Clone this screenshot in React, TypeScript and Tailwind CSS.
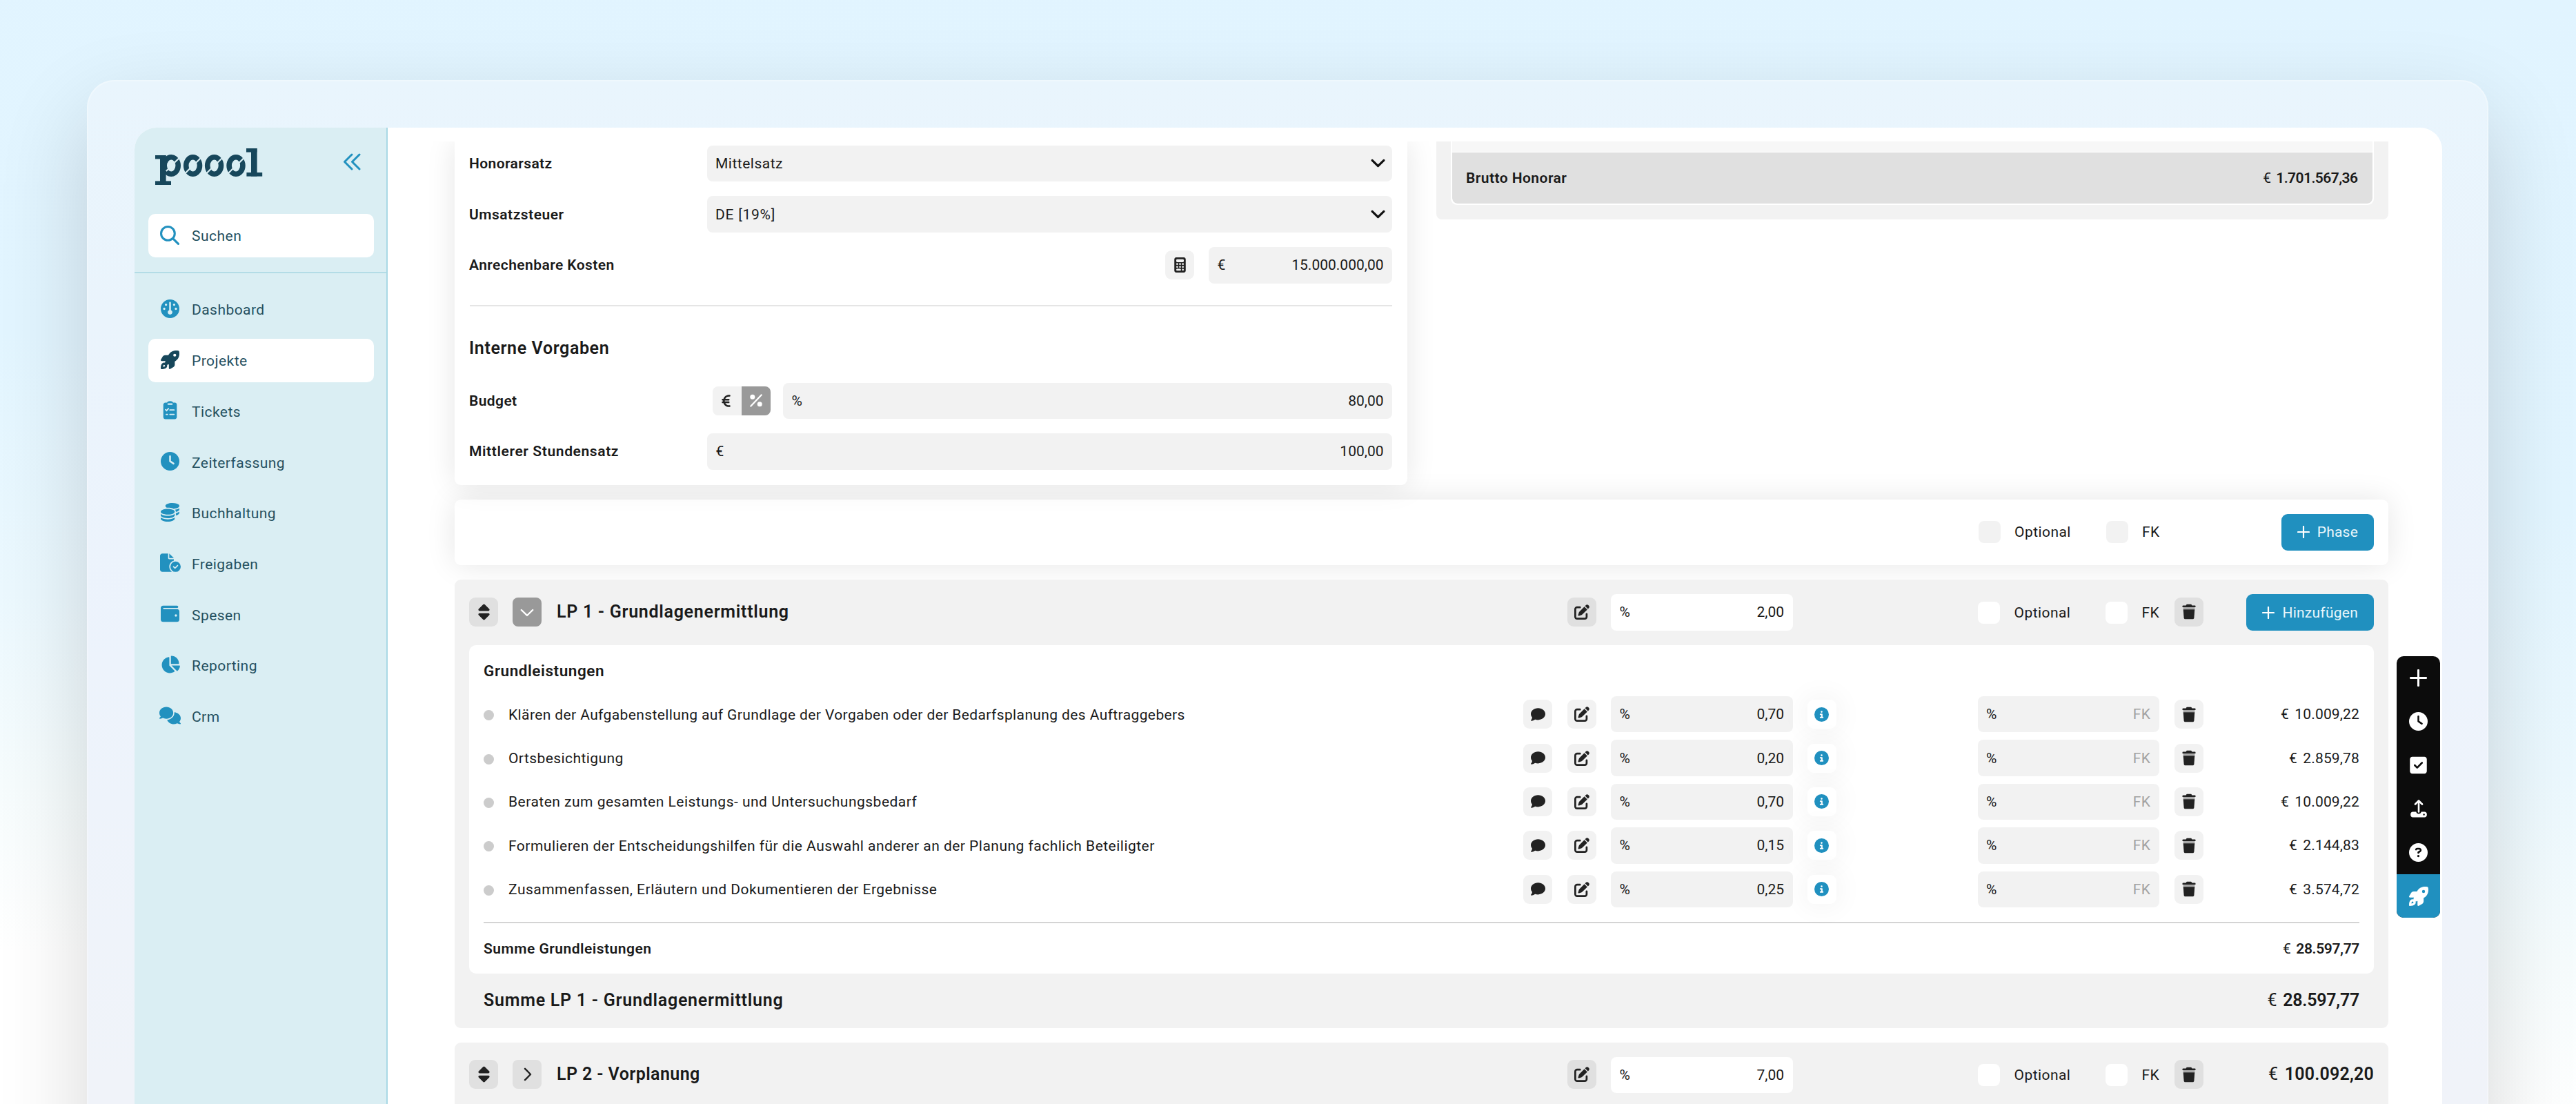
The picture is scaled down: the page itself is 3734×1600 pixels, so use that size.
import React from "react";
import {
  FaCalculator,
  FaChartPie,
  FaCircleInfo,
  FaCircleQuestion,
  FaClock,
  FaCoins,
  FaComment,
  FaComments,
  FaEuroSign,
  FaFileCircleCheck,
  FaGauge,
  FaPenToSquare,
  FaSort,
  FaSquareCheck,
  FaWallet,
} from "react-icons/fa6";

type IconProps = { className?: string };

/* ---------- Icons ---------- */

const Logo = () => (
  <svg viewBox="0 0 156 54" className="h-[54px] w-[156px]" role="img" aria-label="poool">
    <g fill="#17475b">
      <rect x="0" y="10" width="15.5" height="5.4" />
      <rect x="7" y="10" width="8.6" height="43" />
      <rect x="0" y="47.4" width="23" height="5.6" />
      <rect x="132" y="0" width="15.5" height="5.6" />
      <rect x="139" y="0" width="8.6" height="40.5" />
      <rect x="132.4" y="35" width="22.8" height="5.6" />
    </g>
    <g fill="none" stroke="#17475b" strokeWidth="7.6">
      <ellipse cx="23.2" cy="25" rx="10" ry="12.2" />
      <ellipse cx="54.6" cy="25" rx="9.9" ry="12.2" />
      <ellipse cx="85.6" cy="25" rx="9.9" ry="12.2" />
      <ellipse cx="117" cy="25" rx="9.9" ry="12.2" />
    </g>
    <g stroke="#daeef3" strokeWidth="2.2">
      <path d="M28 20.500 36.500 12.500M21.500 27.500 15.800 33M59 21 67.500 12.500M50.500 29 42 37.500M90 21 98.500 12.500M81.500 29 73 37.500M121.500 21 130 12.500M113 29 104.500 37.500" />
    </g>
  </svg>
);

const DoubleChevron = () => (
  <svg viewBox="0 0 26 25" className="h-[25px] w-[26px]" fill="none" stroke="#2291bf" strokeWidth="3" strokeLinecap="round" strokeLinejoin="round">
    <path d="M13 2 2.500 12.500 13 23M24 2 13.500 12.500 24 23" />
  </svg>
);

const Search = ({ className }: IconProps) => (
  <svg viewBox="0 0 27 27" className={className} fill="none" stroke="currentColor" strokeWidth="3" strokeLinecap="round">
    <circle cx="11" cy="11" r="9.500" />
    <path d="m18 18 7.500 7.500" />
  </svg>
);

const Rocket = ({ className }: IconProps) => (
  <svg viewBox="0 0 512 512" className={className} fill="currentColor" fillRule="evenodd">
    <path d="M156.600 384.900 125.700 354c-8.500-8.500-11.500-20.800-7.700-32.200 3-8.900 7-20.500 11.800-33.800H24c-8.600 0-16.600-4.600-20.900-12.100s-4.200-16.700.2-24.100l52.500-88.500C69.700 140.100 94.800 126 122 126h88c2.400-4 4.800-7.700 7.200-11.300C289.100-4.100 411.100-8.100 483.900 5.300c11.600 2.100 20.600 11.200 22.800 22.800 13.400 72.900 9.300 194.800-109.400 266.700-3.500 2.300-7.300 4.800-11.300 7.200v88c0 27.200-14.100 52.300-37.500 66.200l-88.500 52.500c-7.400 4.400-16.600 4.500-24.100.2S224 496.600 224 488V380.800c-14.100 4.900-26.400 8.900-35.700 11.900-11.200 3.600-23.400.5-31.800-7.800zM384 168a40 40 0 1 0 0-80 40 40 0 1 0 0 80z" />
    <path d="M0 495c0-60 8-108 38-138a81 81 0 0 1 116 116c-30 30-78 38-137 39-10 0-17-7-17-17zm66-49c20-1 37-3 46-12a25 25 0 0 0-35-35c-9 9-11 26-12 46z" />
  </svg>
);

const Clipboard = ({ className }: IconProps) => (
  <svg viewBox="0 0 20 27" className={className} fill="currentColor">
    <path d="M3.500 2.500h2C6.500.9 8 .2 10 .2s3.500.7 4.500 2.300h2c2 0 3.300 1.300 3.300 3.300v17.500c0 2-1.300 3.300-3.300 3.300h-13c-2 0-3.300-1.300-3.300-3.300V5.800c0-2 1.300-3.300 3.300-3.300z" />
    <rect x="6.200" y="3.600" width="7.600" height="2.200" rx="1.100" fill="#daeef3" />
    <path d="m3.500 12.700 1.500 1.500 2.700-3M9.800 13.200h6M9.800 19.600h6M4.500 19.600h1.800" stroke="#daeef3" strokeWidth="1.800" fill="none" strokeLinecap="round" />
  </svg>
);

const Trash = () => (
  <svg viewBox="0 0 20 22" className="h-[23px] w-[20px]" fill="#222">
    <path d="M6 1.300C6.200.600 6.800.2 7.500.2h5c.7 0 1.300.4 1.500 1.100l.3.700h4.200c.6 0 1 .4 1 .9v1.600H.5V2.900c0-.5.400-.9 1-.9h4.200z" />
    <path d="M1.500 4.500h17l-.2 3.400H1.700z" fill="#a9a9a9" />
    <path d="M1.700 7.800h16.600l-.9 12.200c-.1 1-.9 1.800-2 1.800H4.600c-1.100 0-1.900-.8-2-1.800z" />
  </svg>
);

const Percent = () => (
  <svg viewBox="0 0 20 20" className="h-[19px] w-[20px]">
    <path d="M18 1.500 2 18.500" stroke="#fff" strokeWidth="2.400" strokeLinecap="round" />
    <circle cx="4.500" cy="4.500" r="3.700" fill="#fff" />
    <circle cx="15.500" cy="15.500" r="3.700" fill="#fff" />
  </svg>
);

const Plus = ({ className }: IconProps) => (
  <svg viewBox="0 0 18 18" className={className} stroke="currentColor" strokeWidth="2.200" strokeLinecap="round">
    <path d="M9 1v16M1 9h16" />
  </svg>
);

const Chevron = ({ className }: IconProps) => (
  <svg viewBox="0 0 20 12" className={className} fill="none" stroke="currentColor" strokeWidth="3" strokeLinecap="round" strokeLinejoin="round">
    <path d="m2 2 8 8 8-8" />
  </svg>
);

const Upload = () => (
  <svg viewBox="0 0 24 26" className="h-[26px] w-[24px]" fill="none" stroke="#fff" strokeLinecap="round" strokeLinejoin="round">
    <path d="M12 17.500V2M7 6.500 12 1.500l5 5" strokeWidth="2.600" />
    <path d="M3.500 17.500h4.800c.4 1.900 1.800 3 3.700 3s3.300-1.100 3.700-3h4.800c1.900 0 3.300 1.300 3.300 3.200v1.600c0 1.900-1.400 3.200-3.300 3.200h-17C1.600 25.500.2 24.200.2 22.300v-1.600c0-1.900 1.400-3.200 3.300-3.200z" fill="#fff" stroke="none" />
    <circle cx="19.600" cy="21.500" r="1.200" fill="#0c0c0c" stroke="none" />
  </svg>
);

/* ---------- Small building blocks ---------- */

const Money = ({ value, className }: { value: string; className: string }) => (
  <span className={className}>
    <span className="mr-[3px] font-normal">€ </span>
    {value}
  </span>
);

const Square = ({ dark, children }: { dark?: boolean; children: React.ReactNode }) => (
  <span className={`flex h-[42px] w-[42px] shrink-0 items-center justify-center rounded-[9px] text-[#222] ${dark ? "bg-[#e0e0e0]" : "bg-[#f2f2f2]"}`}>
    {children}
  </span>
);

const Field = ({ unit, value, className }: { unit: string; value: string; className: string }) => (
  <div className={`flex h-[52.400px] shrink-0 items-center justify-between rounded-[8px] px-[12.500px] ${className}`}>
    <span>{unit}</span>
    {value === "FK" ? <span className="text-[#a3a3a3]">FK</span> : <span className="tracking-normal">{value}</span>}
  </div>
);

const Label = ({ children, className }: { children: string; className: string }) => (
  <span className={`-ml-px w-[345px] shrink-0 font-semibold ${className}`}>{children}</span>
);

const Checks = ({ box }: { box: string }) => (
  <div className="flex w-[263.500px] shrink-0 items-center">
    <span className={`h-[32px] w-[32px] shrink-0 rounded-[8px] ${box}`} />
    <span className="ml-[20.500px] w-[132.500px] shrink-0">Optional</span>
    <span className={`h-[32px] w-[32px] shrink-0 rounded-[8px] ${box}`} />
    <span className="ml-[20.500px]">FK</span>
  </div>
);

const Button = ({ children, gap }: { children: string; gap: string }) => (
  <button className={`flex h-[52.600px] items-center rounded-[9px] bg-[#2090bf] px-[23px] text-[#e9f6fb] ${gap}`}>
    <Plus className="h-[18px] w-[18px] text-white" />
    {children}
  </button>
);

/* ---------- Sidebar ---------- */

const nav = [
  { label: "Dashboard", icon: <FaGauge className="h-[27px] w-[27px]" /> },
  { label: "Projekte", icon: <Rocket className="h-[27px] w-[27px]" />, active: true },
  { label: "Tickets", icon: <Clipboard className="h-[27px] w-[21px]" /> },
  { label: "Zeiterfassung", icon: <FaClock className="h-[27px] w-[27px]" /> },
  { label: "Buchhaltung", icon: <FaCoins className="h-[27px] w-[27px]" /> },
  { label: "Freigaben", icon: <FaFileCircleCheck className="h-[27px] w-[30px]" /> },
  { label: "Spesen", icon: <FaWallet className="h-[27px] w-[27px]" /> },
  { label: "Reporting", icon: <FaChartPie className="h-[28px] w-[28px]" /> },
  { label: "Crm", icon: <FaComments className="h-[30px] w-[31px]" /> },
];

const Sidebar = () => (
  <aside className="flex w-[367px] shrink-0 flex-col border-r-2 border-[#a9d9e5] bg-[#daeef3] text-[#24505f]">
    <div className="flex h-[125px] items-start justify-between pr-[37px] pl-[30px] pt-[30px]">
      <Logo />
      <span className="mt-[7px]">
        <DoubleChevron />
      </span>
    </div>
    <div className="border-b-2 border-[#b3dce6] pr-[18.500px] pl-[20px] pb-[21px]">
      <div className="flex h-[63.300px] items-center rounded-[10px] bg-white pl-[17px]">
        <Search className="mb-[1px] h-[28px] w-[28px] text-[#2291bf]" />
        <span className="ml-[18px] pt-px tracking-[0.500px]">Suchen</span>
      </div>
    </div>
    <nav className="flex flex-col gap-[10.400px] pr-[18.500px] pl-[20px] pt-[21.500px]">
      {nav.map((n) => (
        <div key={n.label} className={`flex h-[63.300px] items-center rounded-[10px] pl-[16px] ${n.active ? "bg-white" : ""}`}>
          <span className={`mb-[3px] flex w-[31px] justify-center ${n.active ? "text-[#17475b]" : "text-[#2291bf]"}`}>{n.icon}</span>
          <span className="ml-[16px] pt-px tracking-[0.450px]">{n.label}</span>
        </div>
      ))}
    </nav>
  </aside>
);

/* ---------- Settings cards ---------- */

const Settings = () => (
  <section className="flex h-[498px] w-[1381px] flex-col rounded-b-[9px] bg-white px-[22px] pt-[6.300px] shadow-[0_0_43px_rgba(0,0,0,0.1)]">
    <div className="flex flex-col gap-[21.300px]">
      <div className="flex items-center">
        <Label className="tracking-[0.400px]">Honorarsatz</Label>
        <div className="flex h-[52.400px] grow items-center justify-between rounded-[8px] bg-[#f2f2f2] pr-[10.500px] pl-[12px]">
          <span className="tracking-[0.500px]">Mittelsatz</span>
          <Chevron className="h-[13px] w-[21px] text-[#111]" />
        </div>
      </div>
      <div className="flex items-center">
        <Label className="tracking-[0.500px]">Umsatzsteuer</Label>
        <div className="flex h-[52.400px] grow items-center justify-between rounded-[8px] bg-[#f2f2f2] pr-[10.500px] pl-[12px]">
          <span className="tracking-[0.750px]">DE [19%]</span>
          <Chevron className="h-[13px] w-[21px] text-[#111]" />
        </div>
      </div>
      <div className="flex items-center justify-between">
        <Label className="tracking-[0.420px]">Anrechenbare Kosten</Label>
        <div className="flex items-center gap-[21px]">
          <Square>
            <FaCalculator className="h-[22px] w-[17px]" />
          </Square>
          <Field unit="€" value="15.000.000,00" className="w-[266px] bg-[#f2f2f2]" />
        </div>
      </div>
    </div>
    <hr className="mt-[31.500px] border-t-2 border-[#e5e5e5]" />
    <h2 className="mt-[46px] -ml-px text-[25px] leading-[30px] font-semibold tracking-[0.620px]">Interne Vorgaben</h2>
    <div className="mt-[34.500px] flex flex-col gap-[21.300px]">
      <div className="flex items-center">
        <Label className="tracking-[0.400px]">Budget</Label>
        <div className="ml-[7.500px] flex h-[42px] w-[84px] shrink-0 overflow-hidden rounded-[8px] bg-[#f2f2f2]">
          <span className="flex w-1/2 items-center justify-center pr-[2px] text-[#222]">
            <FaEuroSign className="h-[20px] w-[15px]" />
          </span>
          <span className="flex w-1/2 items-center justify-center bg-[#999]">
            <Percent />
          </span>
        </div>
        <Field unit="%" value="80,00" className="ml-[18.500px] grow bg-[#f2f2f2]" />
      </div>
      <div className="flex items-center">
        <Label className="tracking-[0.620px]">Mittlerer Stundensatz</Label>
        <Field unit="€" value="100,00" className="grow bg-[#f2f2f2]" />
      </div>
    </div>
  </section>
);

const Gross = () => (
  <section className="flex h-[113px] w-[1380px] flex-col rounded-b-[8px] bg-[#f2f2f2] px-[21px]">
    <div className="overflow-hidden rounded-b-[9px] border-x-2 border-b-2 border-white bg-white">
      <div className="mb-[1.500px] h-[15px] bg-[#f7f7f7]" />
      <div className="flex h-[74px] items-center justify-between rounded-b-[8px] bg-[#e0e0e0] pr-[21.500px] pl-[20px] font-semibold">
        <span className="tracking-[0.450px]">Brutto Honorar</span>
        <Money value="1.701.567,36" className="tracking-[-0.550px]" />
      </div>
    </div>
  </section>
);

/* ---------- Phases ---------- */

const PhaseBar = () => (
  <section className="mt-[21.500px] flex h-[94.500px] items-center justify-end rounded-[9px] bg-white pr-[21px] shadow-[0_0_43px_rgba(0,0,0,0.1)]">
    <Checks box="bg-[#f2f2f2]" />
    <div className="flex w-[310px] justify-end tracking-[0.200px]">
      <Button gap="gap-[11px]">Phase</Button>
    </div>
  </section>
);

const PhaseHeader = ({ title, percent, open, tracking, children }: { title: string; percent: string; open?: boolean; tracking: string; children: React.ReactNode }) => (
  <div className="flex h-[93px] items-center px-[21px]">
    <Square dark>
      <FaSort className="h-[26px] w-[19px]" />
    </Square>
    <span className={`ml-[21px] flex h-[42px] w-[42px] shrink-0 items-center justify-center rounded-[8px] ${open ? "bg-[#999] text-white" : "bg-[#e0e0e0] text-[#222]"}`}>
      <svg viewBox="0 0 20 20" className={`h-[20px] w-[20px] ${open ? "" : "-rotate-90"}`} fill="none" stroke="currentColor" strokeWidth="2.400" strokeLinecap="round" strokeLinejoin="round">
        <path d="m1.800 7 8.200 8 8.200-8" />
      </svg>
    </span>
    <h2 className={`ml-[22px] w-[1464.500px] shrink-0 text-[25px] leading-[30px] font-semibold ${tracking}`}>{title}</h2>
    <Square dark>
      <FaPenToSquare className="h-[22px] w-[22px]" />
    </Square>
    <Field unit="%" value={percent} className="mt-[2px] ml-[21.500px] w-[263.500px] bg-white" />
    <div className="mt-[2px] ml-[268.500px]">
      <Checks box="bg-white" />
    </div>
    <div className="ml-[21.500px]">
      <Square dark>
        <Trash />
      </Square>
    </div>
    <div className="flex grow justify-end">{children}</div>
  </div>
);

const services = [
  { text: "Klären der Aufgabenstellung auf Grundlage der Vorgaben oder der Bedarfsplanung des Auftraggebers", percent: "0,70", amount: "10.009,22", tracking: "tracking-[0.390px]" },
  { text: "Ortsbesichtigung", percent: "0,20", amount: "2.859,78", tracking: "tracking-[0.420px]" },
  { text: "Beraten zum gesamten Leistungs- und Untersuchungsbedarf", percent: "0,70", amount: "10.009,22", tracking: "tracking-[0.490px]" },
  { text: "Formulieren der Entscheidungshilfen für die Auswahl anderer an der Planung fachlich Beteiligter", percent: "0,15", amount: "2.144,83", tracking: "tracking-[0.480px]" },
  { text: "Zusammenfassen, Erläutern und Dokumentieren der Ergebnisse", percent: "0,25", amount: "3.574,72", tracking: "tracking-[0.490px]" },
];

const PhaseOne = () => (
  <section className="relative mt-[21.500px] h-[649.500px] rounded-[9px] bg-[#f2f2f2]">
    <PhaseHeader title="LP 1 - Grundlagenermittlung" percent="2,00" open tracking="tracking-[0.720px]">
      <div className="mt-[2px] tracking-[0.250px]">
        <Button gap="gap-[11px]">Hinzufügen</Button>
      </div>
    </PhaseHeader>
    <div className="mx-[21px] mt-[1.500px] h-[476.500px] rounded-[10px] bg-white px-[21px] pt-[23px]">
      <h3 className="text-[22.500px] leading-[28px] font-semibold tracking-[0.550px]">Grundleistungen</h3>
      <div className="mt-[23.500px] flex flex-col gap-[11.100px]">
        {services.map((s) => (
          <div key={s.text} className="flex h-[52.300px] items-center">
            <span className="mt-[3px] h-[15px] w-[15px] shrink-0 rounded-full bg-[#ccc]" />
            <span className={`ml-[21px] w-[1471px] shrink-0 pt-px ${s.tracking}`}>{s.text}</span>
            <Square>
              <FaComment className="h-[21px] w-[21px]" />
            </Square>
            <span className="ml-[21.500px]">
              <Square>
                <FaPenToSquare className="h-[22px] w-[22px]" />
              </Square>
            </span>
            <Field unit="%" value={s.percent} className="ml-[21.500px] w-[263.500px] bg-[#f2f2f2]" />
            <span className="ml-[21px] flex h-[42px] w-[42px] shrink-0 items-center justify-center rounded-[9px] bg-white text-[#2090bf] shadow-[0_0_43px_rgba(0,0,0,0.07)]">
              <FaCircleInfo className="h-[21px] w-[21px]" />
            </span>
            <Field unit="%" value="FK" className="ml-[205px] w-[263.500px] bg-[#f2f2f2]" />
            <span className="ml-[21.500px]">
              <Square>
                <Trash />
              </Square>
            </span>
            <span className="grow text-right tracking-[0.150px]">
              <span className="mr-[3px]">€ </span>
              {s.amount}
            </span>
          </div>
        ))}
      </div>
      <hr className="mt-[21px] border-t-2 border-[#d4d4d4]" />
      <div className="flex h-[74px] items-center justify-between font-semibold">
        <span className="tracking-[0.490px]">Summe Grundleistungen</span>
        <Money value="28.597,77" className="tracking-[-0.350px]" />
      </div>
    </div>
    <div className="flex h-[77.500px] items-center justify-between px-[42px] text-[25px] font-semibold">
      <span className="tracking-[0.750px]">Summe LP 1 - Grundlagenermittlung</span>
      <Money value="28.597,77" className="tracking-[-0.250px]" />
    </div>
  </section>
);

const PhaseTwo = () => (
  <section className="mt-[21px] h-[200px] rounded-[9px] bg-[#f2f2f2]">
    <PhaseHeader title="LP 2 - Vorplanung" percent="7,00" tracking="tracking-[0.420px]">
      <Money value="100.092,20" className="text-[25px] font-semibold tracking-[0.200px]" />
    </PhaseHeader>
  </section>
);

/* ---------- Quick actions ---------- */

const Toolbar = () => (
  <div className="absolute top-[766px] right-[3px] flex w-[63px] flex-col overflow-hidden rounded-[10px] bg-[#0c0c0c] text-white">
    {[
      <Plus key="plus" className="h-[25px] w-[25px]" />,
      <FaClock key="clock" className="h-[27px] w-[27px]" />,
      <FaSquareCheck key="check" className="h-[28px] w-[25px]" />,
      <Upload key="upload" />,
      <FaCircleQuestion key="help" className="h-[27px] w-[27px]" />,
    ].map((icon) => (
      <span key={icon.key} className="flex h-[63.300px] items-center justify-center">
        {icon}
      </span>
    ))}
    <span className="flex h-[63.300px] items-center justify-center bg-[#2090bf]">
      <Rocket className="h-[28px] w-[28px]" />
    </span>
  </div>
);

export default function App() {
  return (
    <div className="h-[1600px] w-[3734px] overflow-hidden bg-[linear-gradient(184deg,#e1f4ff_0%,#e2f5ff_40%,#ebf8fe_60%,#f6fcfd_75%,#ffffff_88%)] pt-[116px] pl-[126px] font-[Roboto,'Noto_Sans',sans-serif] text-[21px] leading-[26px] tracking-[0.450px] text-[#1a1a1a]">
      <div className="h-[1700px] w-[3481px] rounded-[40px] bg-[linear-gradient(180deg,#e9f5fd_0%,#eaf4fc_20%,#edf3fc_50%,#f0f3f9_85%)] px-[69px] pt-[68.500px] shadow-[0_50px_130px_rgba(0,0,0,0.16),inset_0_0_0_2px_rgba(255,255,255,0.3)]">
        <div className="relative flex h-[1600px] w-[3345px] overflow-hidden rounded-[32px] bg-white">
          <Sidebar />
          <main className="grow pt-[20px]">
            <div className="h-[1580px] overflow-hidden pr-[78px] pl-[97px]">
              <div className="flex items-start justify-between">
                <Settings />
                <Gross />
              </div>
              <PhaseBar />
              <PhaseOne />
              <PhaseTwo />
            </div>
          </main>
          <Toolbar />
        </div>
      </div>
    </div>
  );
}
